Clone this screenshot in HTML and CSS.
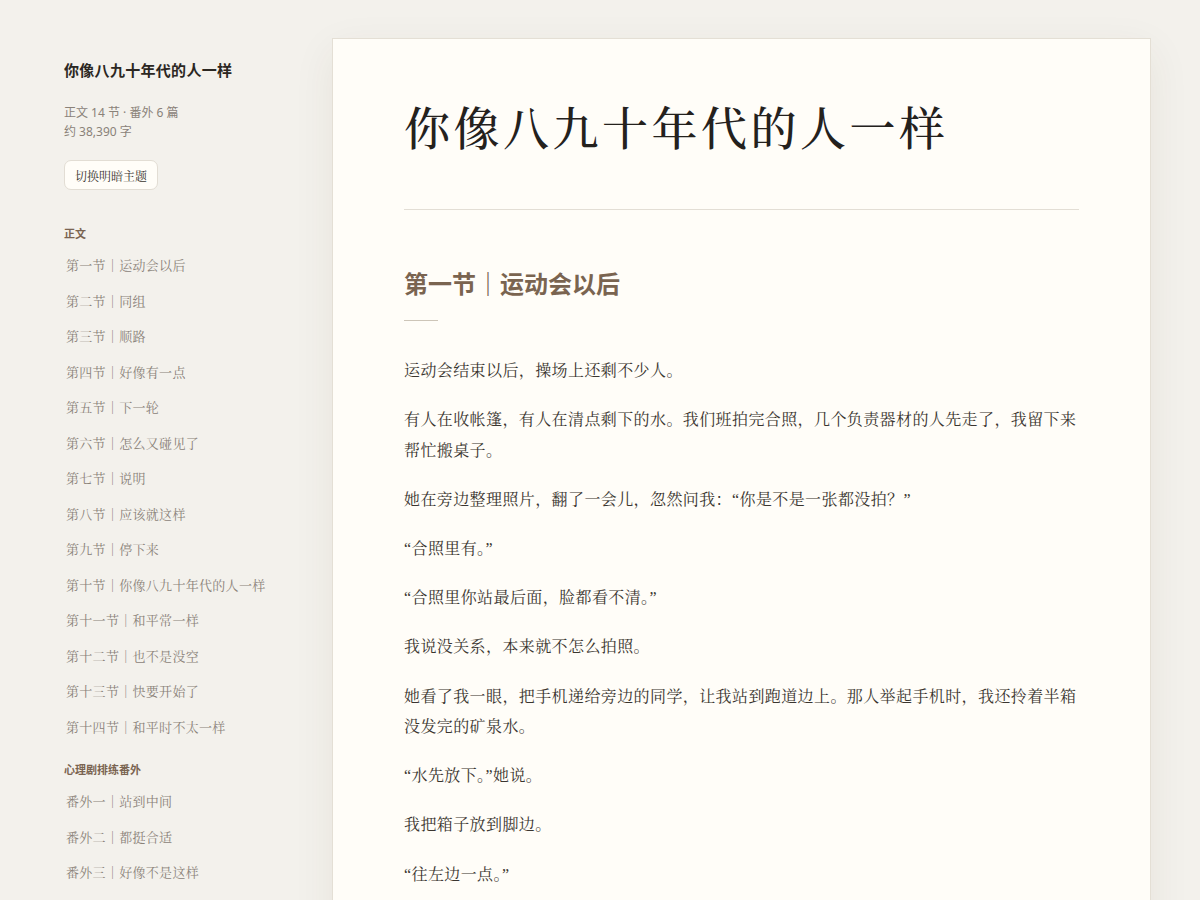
FILE: index.html
```html
<!DOCTYPE html>
<html lang="zh-CN">
<head>
<meta charset="utf-8">
<title>你像八九十年代的人一样</title>
<link rel="stylesheet" href="styles.css">
</head>
<body>
<div class="layout">
  <aside class="sidebar">
    <h1 class="side-title">你像八九十年代的人一样</h1>
    <p class="meta">正文 14 节 · 番外 6 篇<br>约 38,390 字</p>
    <button class="theme-btn" type="button">切换明暗主题</button>
    <nav class="toc">
      <div class="toc-group">
        <div class="toc-label">正文</div>
        <a class="toc-item" href="#">第一节｜运动会以后</a>
        <a class="toc-item" href="#">第二节｜同组</a>
        <a class="toc-item" href="#">第三节｜顺路</a>
        <a class="toc-item" href="#">第四节｜好像有一点</a>
        <a class="toc-item" href="#">第五节｜下一轮</a>
        <a class="toc-item" href="#">第六节｜怎么又碰见了</a>
        <a class="toc-item" href="#">第七节｜说明</a>
        <a class="toc-item" href="#">第八节｜应该就这样</a>
        <a class="toc-item" href="#">第九节｜停下来</a>
        <a class="toc-item" href="#">第十节｜你像八九十年代的人一样</a>
        <a class="toc-item" href="#">第十一节｜和平常一样</a>
        <a class="toc-item" href="#">第十二节｜也不是没空</a>
        <a class="toc-item" href="#">第十三节｜快要开始了</a>
        <a class="toc-item" href="#">第十四节｜和平时不太一样</a>
      </div>
      <div class="toc-group">
        <div class="toc-label">心理剧排练番外</div>
        <a class="toc-item" href="#">番外一｜站到中间</a>
        <a class="toc-item" href="#">番外二｜都挺合适</a>
        <a class="toc-item" href="#">番外三｜好像不是这样</a>
      </div>
    </nav>
  </aside>
  <main class="page">
    <header class="page-head">
      <h1 class="page-title">你像八九十年代的人一样</h1>
    </header>
    <section class="chapter">
      <h2 class="chapter-title">第一节｜运动会以后</h2>
      <div class="chapter-rule"></div>
      <p>运动会结束以后，操场上还剩不少人。</p>
      <p>有人在收帐篷，有人在清点剩下的水。我们班拍完合照，几个负责器材的人先走了，我留下来帮忙搬桌子。</p>
      <p>她在旁边整理照片，翻了一会儿，忽然问我：“你是不是一张都没拍？”</p>
      <p>“合照里有。”</p>
      <p>“合照里你站最后面，脸都看不清。”</p>
      <p>我说没关系，本来就不怎么拍照。</p>
      <p>她看了我一眼，把手机递给旁边的同学，让我站到跑道边上。那人举起手机时，我还拎着半箱没发完的矿泉水。</p>
      <p>“水先放下。”她说。</p>
      <p>我把箱子放到脚边。</p>
      <p>“往左边一点。”</p>
    </section>
  </main>
</div>
</body>
</html>
```
FILE: styles.css
```css
html, body {
  margin: 0;
  padding: 0;
}
body {
  background: #f3f1ec;
  color: #2b2722;
  font-family: "Noto Sans", "Noto Sans CJK SC", sans-serif;
  height: 900px;
  overflow: hidden;
}
.layout {
  display: flex;
  align-items: flex-start;
  padding: 38px 49px 0 64px;
}
.sidebar {
  width: 268px;
  flex: none;
  padding-top: 21px;
}
.side-title {
  margin: 0;
  font-family: "Noto Sans CJK SC", sans-serif;
  font-size: 15px;
  line-height: 22px;
  font-weight: 700;
  letter-spacing: 0.3px;
  color: #2b2722;
}
.meta {
  margin: 22px 0 0;
  font-size: 12px;
  line-height: 19px;
  color: #8a8279;
}
.theme-btn {
  margin-top: 19px;
  height: 30px;
  padding: 0 10px;
  border: 1px solid #e2ddd4;
  border-radius: 7px;
  background: #fffdf8;
  font-family: "Noto Serif CJK SC", "Noto Sans CJK SC", serif;
  font-size: 12px;
  color: #3a352f;
}
.toc {
  margin-top: 35px;
}
.toc-group {
  margin-bottom: 17px;
}
.toc-label {
  font-family: "Noto Sans CJK SC", sans-serif;
  font-size: 11px;
  line-height: 16px;
  font-weight: 700;
  color: #7a6451;
  margin-bottom: 6px;
}
.toc-item {
  display: block;
  padding: 7px 2px;
  font-family: "Noto Serif CJK SC", "Noto Sans CJK SC", serif;
  font-size: 13px;
  line-height: 21.5px;
  letter-spacing: 0.3px;
  color: #8a8279;
  text-decoration: none;
}
.page {
  flex: 1;
  min-height: 1000px;
  background: #fffdf8;
  border: 1px solid #e4dfd5;
  box-shadow: 0 12px 40px rgba(70, 55, 30, 0.07);
  padding: 56px 71px 40px;
}
.page-head {
  padding-bottom: 54px;
  border-bottom: 1px solid #e3ded5;
}
.page-title {
  margin: 0;
  font-family: "Noto Serif CJK SC", serif;
  font-size: 46px;
  line-height: 60px;
  font-weight: 500;
  letter-spacing: 3.5px;
  color: #24211d;
}
.chapter {
  padding-top: 55px;
}
.chapter-title {
  margin: 0;
  font-family: "Noto Sans CJK SC", sans-serif;
  font-size: 24px;
  line-height: 36px;
  font-weight: 700;
  color: #7a6450;
}
.chapter-rule {
  width: 34px;
  height: 1px;
  background: #cdc5b8;
  margin: 19px 0 35px;
}
.chapter p {
  margin: 0 0 18.8px;
  font-family: "Liberation Serif", "Noto Serif CJK SC", serif;
  font-size: 16px;
  line-height: 30.4px;
  letter-spacing: 0.4px;
  color: #3a352f;
}
```
